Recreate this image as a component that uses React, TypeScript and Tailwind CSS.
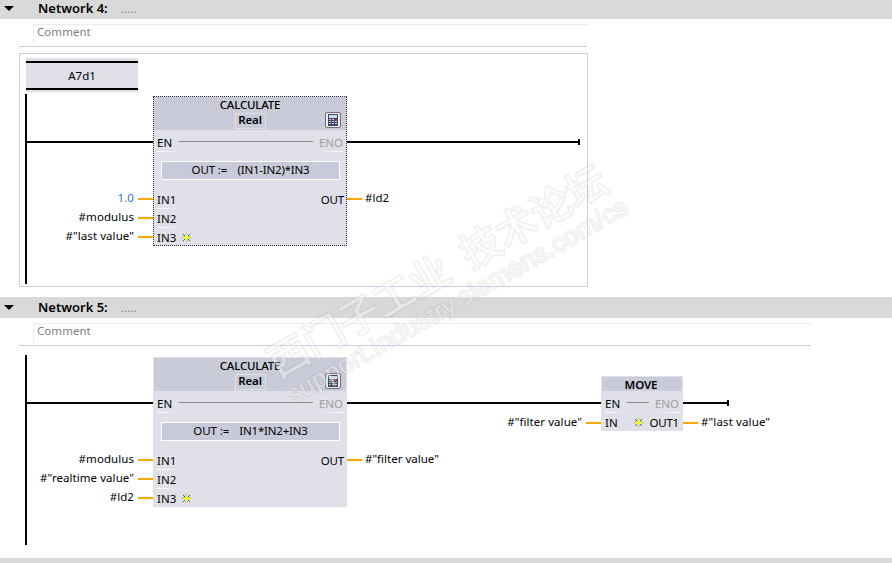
import React from 'react';

type Pin = { pin: string; tag: string; constant?: boolean };

type CalculateProps = {
  expression: string;
  inputs: Pin[];
  output: string;
  selected?: boolean;
};

const Star = () => (
  <svg width="9" height="9" viewBox="0 0 9 9" shapeRendering="crispEdges">
    <path d="M3 1h1v2h-1z M1 3h2v1h-2z M6 3h2v1h-2z M5 6h1v2h-1z" fill="#b4ccb4" />
    <path d="M1 1h1v1h-1z M7 1h1v1h-1z M1 7h1v1h-1z M7 7h1v1h-1z M2 2h1v1h-1z M6 2h1v1h-1z M2 6h1v1h-1z M6 6h1v1h-1z" fill="#1c6c8c" />
    <path d="M4 0h1v9h-1z M0 4h9v1h-9z" fill="#a8b010" />
    <path d="M3 3h3v3h-3z M4 1h1v7h-1z M1 4h7v1h-7z" fill="#ffff00" />
  </svg>
);

const CalculatorIcon = () => (
  <svg width="16" height="16" viewBox="0 0 16 16">
    <rect x="0.5" y="0.5" width="15" height="15" rx="1.5" fill="#ececec" stroke="#707070" />
    <g shapeRendering="crispEdges">
      <rect x="3" y="2" width="10" height="12" fill="#3d4663" />
      <rect x="4" y="3" width="8" height="3" fill="#cfdcf2" />
      <path d="M4 7h2v1h-2z M7 7h2v1h-2z M4 9h2v1h-2z M7 9h2v1h-2z M10 9h2v1h-2z M4 11h2v1h-2z M7 11h2v1h-2z M10 11h2v1h-2z" fill="#c8cede" />
      <rect x="10" y="7" width="2" height="2" fill="#e02020" />
    </g>
  </svg>
);

const Header = ({ title }: { title: string }) => (
  <div className="flex h-[21px] items-center bg-[#d9d9d9] pl-1">
    <svg width="10" height="5" viewBox="0 0 10 5">
      <path d="M0 0h10L5 5z" fill="#000" />
    </svg>
    <span className="-mt-0.5 ml-6 w-[83px] text-[13px] font-semibold whitespace-nowrap">{title}</span>
    <span className="text-[11px] tracking-[0.2px] text-[#808080]">.....</span>
  </div>
);

const Comment = () => (
  <div className="h-[23px] border-b border-[#cdcbe7] pl-3.5">
    <div className="-mr-px h-5 border-t border-l border-[#ececec] pl-[3px] text-[11.5px] leading-[13px] tracking-[0.05px] text-[#808080]">
      Comment
    </div>
  </div>
);

const Wire = ({ className }: { className: string }) => (
  <div className={`h-0.5 shrink-0 bg-black ${className}`} />
);

const Terminal = () => <div className="-mt-0.5 h-1.5 w-0.5 shrink-0 bg-black" />;

const Operand = ({ pin }: { pin: Pin }) => (
  <div className="flex h-[19px] items-center justify-end whitespace-nowrap">
    <span className={`-mt-px mr-1 tracking-[0.06px] ${pin.constant ? 'text-[#3a6fd0]' : ''}`}>{pin.tag}</span>
    <span className="h-0.5 w-[15px] shrink-0 bg-[#ffa500]" />
  </div>
);

const Enable = ({ className }: { className: string }) => (
  <div className={`flex shrink-0 items-center justify-between px-1 ${className}`}>
    <span>EN</span>
    <span className="mr-[6px] ml-[7px] -mt-[3px] h-px flex-1 bg-[#8a8a8a]" />
    <span className="text-[#a0a0a0]">ENO</span>
  </div>
);

const Fade = () => (
  <div className="mx-1 flex h-px justify-between">
    <div className="w-[25px] bg-linear-to-r from-white to-transparent" />
    <div className="w-[28px] bg-linear-to-l from-white to-transparent" />
  </div>
);

const Calculate = ({ expression, inputs, output, selected }: CalculateProps) => (
  <div className="flex items-start">
    <div className="flex w-[126px] flex-col">
      <Wire className="mt-[45px] w-full" />
      <div className="mt-[46px] flex flex-col">
        {inputs.map((input) => (
          <Operand key={input.pin} pin={input} />
        ))}
      </div>
    </div>
    <div
      className={`h-[150px] w-[194px] border bg-[#dfe0e8] ${
        selected ? 'border-dotted border-[#303038]' : 'border-[#dfe0e8]'
      }`}
    >
      <div className="relative flex h-[33px] flex-col items-center bg-[#cacbd9]">
        <div className="h-4 text-[11.5px] leading-[16px] font-medium tracking-[-0.2px]">CALCULATE</div>
        <div className="h-4 w-[31px] border border-[#dfe0e8] text-center leading-[12px] font-semibold tracking-[-0.1px]">
          Real
        </div>
        <div className="absolute top-[15px] right-[5px]">
          <CalculatorIcon />
        </div>
      </div>
      <Enable className="-mx-px mt-[3px] h-[19px]" />
      <div className="-mx-px -mt-px">
        <Fade />
      </div>
      <div className="mr-[6px] ml-[7px] mt-[9px] flex h-[19px] justify-center border border-white bg-[#c9cad9] text-[11.5px]">
        <span className="w-[46px] tracking-[-0.1px]">OUT :=</span>
        <span className="tracking-[-0.2px] whitespace-pre">{expression}</span>
      </div>
      <div className="-mx-px mt-[10px] flex justify-between">
        <div className="flex flex-col">
          {inputs.map((input, idx) => (
            <div key={input.pin} className="flex h-[19px] flex-col">
              <div className="flex h-[18px] items-center pl-1">
                <span className="mt-0.5 w-[25px]">{input.pin}</span>
                {idx === inputs.length - 1 && <Star />}
              </div>
              {idx < inputs.length - 1 && (
                <div className="ml-1 h-px w-[25px] bg-linear-to-r from-white to-transparent" />
              )}
            </div>
          ))}
        </div>
        <span className="pr-[3px] leading-[19px] tracking-[-0.2px]">OUT</span>
      </div>
    </div>
    <div className="mt-[94px] flex w-0 items-center whitespace-nowrap">
      <div className="mt-[2px] h-0.5 w-[15px] shrink-0 bg-[#ffa500]" />
      <span className="ml-[3px] leading-[16px]">{output}</span>
    </div>
  </div>
);

const Move = ({ input, output }: { input: string; output: string }) => (
  <div className="flex h-[55px] w-[82px] flex-col border border-[#dfe0e8] bg-[#dfe0e8]">
    <div className="h-[14px] shrink-0 bg-[#cacbd9] pr-0.5 text-center leading-[16px] font-semibold tracking-[-0.1px]">
      MOVE
    </div>
    <Enable className="-mx-px mt-1 -mb-px h-[18px]" />
    <div className="-mx-px shrink-0">
      <Fade />
    </div>
    <div className="-mx-[97px] flex h-[19px] shrink-0 items-center whitespace-nowrap">
      <div className="w-[96px]">
        <Operand pin={{ pin: 'IN', tag: input }} />
      </div>
      <div className="flex w-[82px] items-center pr-1 pl-1">
        <span className="w-[29px]">IN</span>
        <Star />
        <span className="ml-auto tracking-[-0.2px]">OUT1</span>
      </div>
      <span className="h-0.5 w-[15px] shrink-0 bg-[#ffa500]" />
      <span className="-mt-px ml-[3px] tracking-[0.12px]">{output}</span>
    </div>
  </div>
);

const Watermark = () => (
  <svg
    className="pointer-events-none absolute top-0 left-0"
    width="892"
    height="563"
    fill="#ffffff"
    fillOpacity="0.45"
    stroke="#808080"
    strokeOpacity="0.15"
    strokeWidth="2.4"
    strokeLinejoin="round"
    paintOrder="stroke"
  >
    <g transform="translate(296 402) rotate(-29.6)">
      <g fontSize="40.5" fontFamily="Noto Sans CJK SC, sans-serif" fontWeight="500">
        <text x="-4" y="-29">西门子工业</text>
        <text x="217" y="-29">技术论坛</text>
      </g>
      <text x="-4" y="0" fontSize="26" fontFamily="Liberation Sans, sans-serif" textLength="388">
        support.industry.siemens.com/cs
      </text>
    </g>
  </svg>
);

export default function App() {
  return (
    <div className="relative h-[563px] w-[892px] overflow-hidden bg-white font-['Noto_Sans',sans-serif] text-[11.5px] leading-[16px] text-black">
      <div className="-mt-0.5">
        <Header title="Network 4:" />
      </div>
      <div className="mt-[5px] ml-[19px] h-[23px] w-[568px]">
        <Comment />
      </div>
      <div className="mt-[6px] ml-[19px] h-[234px] w-[569px] border border-[#cdcbe7] pt-1 pl-[5px]">
        <div className="ml-px h-[34px] w-28 bg-[#dfe0e8] pt-[3px]">
          <div className="h-[29px] border-y-2 border-black text-center leading-[26px]">A7d1</div>
        </div>
        <div className="mt-0.5 flex h-[190px] items-start border-l-2 border-black pt-0.5">
          <Calculate
            selected
            expression="(IN1-IN2)*IN3"
            inputs={[
              { pin: 'IN1', tag: '1.0', constant: true },
              { pin: 'IN2', tag: '#modulus' },
              { pin: 'IN3', tag: '#"last value"' },
            ]}
            output="#ld2"
          />
          <Wire className="mt-[45px] w-[231px]" />
          <div className="mt-[45px]">
            <Terminal />
          </div>
        </div>
      </div>
      <div className="mt-[10px]">
        <Header title="Network 5:" />
      </div>
      <div className="mt-[5px] ml-[19px] h-[23px] w-[792px]">
        <Comment />
      </div>
      <div className="mt-[9px] ml-[25px] flex h-[190px] items-start border-l-2 border-black pt-0.5">
        <Calculate
          expression="IN1*IN2+IN3"
          inputs={[
            { pin: 'IN1', tag: '#modulus' },
            { pin: 'IN2', tag: '#"realtime value"' },
            { pin: 'IN3', tag: '#ld2' },
          ]}
          output={'#"filter value"'}
        />
        <Wire className="mt-[45px] w-[254px]" />
        <div className="mt-[19px]">
          <Move input={'#"filter value"'} output={'#"last value"'} />
        </div>
        <Wire className="mt-[45px] w-11" />
        <div className="mt-[45px]">
          <Terminal />
        </div>
      </div>
      <div className="mt-[13px] h-[5px] bg-[#d9d9d9]" />
      <Watermark />
    </div>
  );
}
